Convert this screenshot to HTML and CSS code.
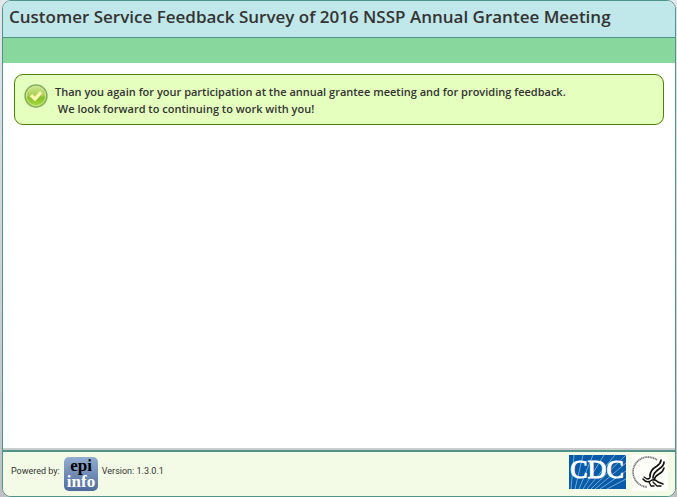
FILE: index.html
```html
<!DOCTYPE html>
<html lang="en">
<head>
    <meta charset="UTF-8">
    <title>Customer Service Feedback Survey</title>
    <link rel="stylesheet" href="styles.css">
</head>
<body>
<div id="container">
    <header class="header">
        <h1>Customer Service Feedback Survey of 2016 NSSP Annual Grantee Meeting</h1>
    </header>
    <div class="bar"></div>

    <main class="content">
        <div class="success">
            <svg class="check" viewBox="0 0 24 24" aria-hidden="true">
                <defs>
                    <linearGradient id="ball" x1="0" y1="0" x2="0" y2="1">
                        <stop offset="0" stop-color="#cfe69a"/>
                        <stop offset="0.5" stop-color="#a5d04c"/>
                        <stop offset="0.55" stop-color="#86bf2c"/>
                        <stop offset="1" stop-color="#a8dc3c"/>
                    </linearGradient>
                </defs>
                <circle cx="12" cy="12" r="11" fill="url(#ball)" stroke="#86ad60" stroke-width="1.4"/>
                <circle cx="12" cy="12" r="9.6" fill="none" stroke="#d5ec9c" stroke-width="0.8"/>
                <path d="M6 12.5l2.2-2.3 2.8 2.6 5-5.6 2.2 2-7.1 8z" fill="#fff9b8" stroke="#e6eb91" stroke-width="0.6"/>
            </svg>
            <p>Than you again for your participation at the annual grantee meeting and for providing feedback.<br>&nbsp;We look forward to continuing to work with you!</p>
        </div>
    </main>

    <footer class="footer">
        <div class="powered">
            <span>Powered by:</span>
            <svg class="epi" viewBox="0 0 34 34" role="img" aria-label="epi info">
                <defs>
                    <linearGradient id="tile" x1="0" y1="0" x2="0" y2="1">
                        <stop offset="0" stop-color="#93add0"/>
                        <stop offset="1" stop-color="#4e6c9c"/>
                    </linearGradient>
                </defs>
                <rect width="34" height="34" rx="5" fill="url(#tile)"/>
                <text class="epi-text"><tspan x="17" y="14" fill="#000">epi</tspan><tspan x="17" y="30" fill="#fff">info</tspan></text>
            </svg>
            <span>Version: 1.3.0.1</span>
        </div>
        <div class="logos">
            <svg class="cdc" viewBox="0 0 57 34" role="img" aria-label="CDC">
                <rect width="57" height="34" fill="#075ba9"/>
                <g stroke="#8fbbe0" stroke-width="0.8" fill="none">
                    <path d="M2 34L5 0M6 34L14 0M10 34L24 0M14 34L35 0M18 34L46 0M22 34L57 0M26 34L57 8M31 34L57 16M38 34L57 24"/>
                </g>
                <text class="cdc-text" x="28" y="23">CDC</text>
            </svg>
            <svg class="hhs" viewBox="0 0 36 36" role="img" aria-label="Department of Health and Human Services">
                <rect width="36" height="36" fill="#fdfef8"/>
                <path d="M25 5A15 15 0 1 0 15 32" fill="none" stroke="#77777d" stroke-width="1.8" stroke-dasharray="1.2 0.5"/>
                <g fill="none" stroke="#111" stroke-linecap="round" stroke-linejoin="round">
                    <path d="M29 5Q29 8 25 11Q18 15 18 21" stroke-width="1.7"/>
                    <path d="M32 7Q32 11 27 14Q21 18 21 23" stroke-width="1.7"/>
                    <path d="M32 13Q31 17 27 19Q23 21 22 25" stroke-width="1.5"/>
                    <path d="M18 20Q19 24 15 24L12 22" stroke-width="1.3"/>
                    <path d="M11 24Q15 29 20 25Q23 24 26 27L31 29" stroke-width="1.6"/>
                    <path d="M17 27L19 31L22 31M21 27L25 31L29 31" stroke-width="1.3"/>
                </g>
            </svg>
        </div>
    </footer>
</div>
</body>
</html>
```

FILE: styles.css
```css
*{
    margin: 0;
    padding: 0;
    box-sizing: border-box;
}
body{
    background: linear-gradient(#e4e6ee, #bfc0c4);
    color: #333;
    font-family: "Open Sans", "Noto Sans", sans-serif;
}
#container{
    display: flex;
    flex-direction: column;
    min-height: 100vh;
    margin: 0 1px 0 2px;
    border: 1px solid #4f9488;
    border-radius: 9px;
    background: #fff;
    overflow: hidden;
}
.header{
    padding: 4px 6px 8px;
    background: #c0e7e9;
    border-bottom: 1px solid #4f9488;
}
.header h1{
    font-size: 17px;
    font-weight: 600;
    line-height: 24px;
    white-space: nowrap;
}
.bar{
    height: 25px;
    background: #88d79c;
}
.content{
    flex: 1;
    padding: 11px;
}
.success{
    display: flex;
    gap: 7px;
    padding: 8px 9px 7px;
    background: #e5ffbe;
    border: 1px solid #4f8106;
    border-radius: 9px;
}
.check{
    flex: none;
    width: 24px;
    height: 24px;
    margin-top: 1px;
}
.success p{
    font-size: 11px;
    font-weight: 600;
    line-height: 17px;
}
.footer{
    display: flex;
    justify-content: space-between;
    align-items: flex-end;
    padding: 3px 7px 5px 8px;
    background: #f3fbe6;
    border-top: 2px solid #4f9488;
    box-shadow: 0 -2px 0 #ccc;
}
.powered{
    display: flex;
    gap: 4px;
    font-family: Roboto, "Open Sans", sans-serif;
    font-size: 9px;
    line-height: 12px;
}
.powered span{
    padding-top: 8px;
}
.epi{
    width: 34px;
    height: 34px;
}
.epi-text{
    font: bold 17px "Liberation Serif", serif;
    text-anchor: middle;
}
.logos{
    display: flex;
    gap: 6px;
}
.cdc{
    width: 57px;
    height: 34px;
}
.cdc-text{
    font: 26px "Liberation Serif", serif;
    text-anchor: middle;
    fill: #fff;
    stroke: #fff;
    stroke-width: 1px;
}
.hhs{
    width: 36px;
    height: 36px;
}
```
